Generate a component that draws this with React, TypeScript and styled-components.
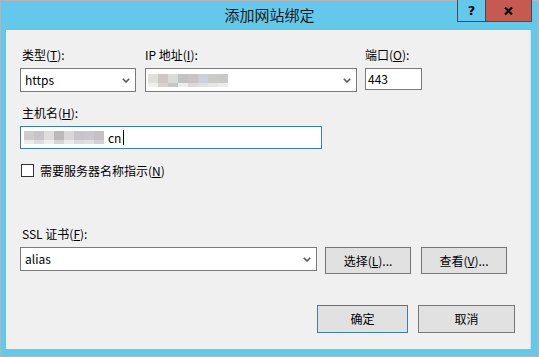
import React from "react";
import styled, { createGlobalStyle } from "styled-components";

const Global = createGlobalStyle`
  html, body { margin: 0; padding: 0; background: #ffffff; }
  * { box-sizing: border-box; }
`;

const FONT = `"Noto Sans CJK SC", "Noto Sans", sans-serif`;

const Win = styled.div`
  width: 539px;
  height: 357px;
  border: 1px solid #b5b5b5;
  background: #64c8ea;
  display: flex;
  flex-direction: column;
  font-family: ${FONT};
  font-size: 12px;
  color: #000;
`;

const TitleBar = styled.div`
  height: 29px;
  display: grid;
  grid-template-columns: 1fr auto 1fr;
  align-items: start;
`;

const Title = styled.div`
  grid-column: 2;
  align-self: center;
  font-size: 15px;
  line-height: 20px;
  color: #1a1a1a;
  margin-top: -1px;
`;

const Controls = styled.div`
  grid-column: 3;
  justify-self: end;
  display: flex;
  margin-top: -1px;
  margin-right: 6px;
  border: 1px solid #4a4a4a;
  border-top: none;
`;

const CtlButton = styled.div<{ $close?: boolean }>`
  width: ${(p) => (p.$close ? "46px" : "27px")};
  height: 21px;
  background: ${(p) => (p.$close ? "#c75a50" : "#64c8ea")};
  border-left: ${(p) => (p.$close ? "1px solid #4a4a4a" : "none")};
  display: flex;
  align-items: center;
  justify-content: center;
  font-family: "DejaVu Sans", sans-serif;
  font-weight: bold;
  font-size: 13px;
  color: #000;
`;

const Content = styled.div`
  flex: 1;
  margin: 0 7px 7px 5px;
  background: #f0f0f0;
  border-right: 1px solid #dcdcdc;
  padding: 17px 15px 0 14px;
  display: flex;
  flex-direction: column;
`;

const Row = styled.div<{ $mt?: number; $gap?: number; $justify?: string }>`
  display: flex;
  align-items: flex-start;
  margin-top: ${(p) => p.$mt ?? 0}px;
  gap: ${(p) => p.$gap ?? 0}px;
  justify-content: ${(p) => p.$justify ?? "flex-start"};
`;

const Column = styled.div<{ $w: number; $mr?: number }>`
  width: ${(p) => p.$w}px;
  margin-right: ${(p) => p.$mr ?? 0}px;
  display: flex;
  flex-direction: column;
`;

const Label = styled.div<{ $mt?: number; $pl?: number }>`
  height: 16px;
  line-height: 16px;
  margin-top: ${(p) => p.$mt ?? 0}px;
  margin-bottom: 5px;
  padding-left: ${(p) => p.$pl ?? 0}px;
  white-space: nowrap;
`;

const SelectBox = styled.div<{ $w?: number }>`
  width: ${(p) => (p.$w ? `${p.$w}px` : "100%")};
  height: 24px;
  border: 1px solid #7a7a7a;
  background: #fff;
  display: flex;
  align-items: center;
  justify-content: space-between;
  padding: 0 5px 0 4px;
`;

const TextBox = styled.div<{ $w?: number; $h?: number; $focus?: boolean }>`
  width: ${(p) => (p.$w ? `${p.$w}px` : "100%")};
  height: ${(p) => p.$h ?? 22}px;
  border: 1px solid ${(p) => (p.$focus ? "#3c7cb0" : "#7a7a7a")};
  background: #fff;
  display: flex;
  align-items: center;
  padding: 0 2px;
`;

const Value = styled.span`
  line-height: 16px;
`;

const Caret = styled.span`
  width: 1px;
  height: 15px;
  background: #000;
  margin-left: 2px;
`;

const Pixels = styled.div<{ $ml?: number }>`
  display: flex;
  flex-direction: column;
  margin-left: ${(p) => p.$ml ?? 0}px;
`;

const PixRow = styled.div`
  display: flex;
`;

const Pix = styled.span<{ $c: string; $h: number }>`
  width: 10px;
  height: ${(p) => p.$h}px;
  background: ${(p) => p.$c};
`;

const CheckRow = styled.div`
  display: flex;
  align-items: center;
  height: 16px;
  margin-top: 13px;
  padding-left: 1px;
  gap: 6px;
`;

const CheckBox = styled.span`
  width: 13px;
  height: 13px;
  border: 1px solid #333;
  background: #fff;
`;

const Button = styled.div<{ $w: number; $h: number; $default?: boolean }>`
  width: ${(p) => p.$w}px;
  height: ${(p) => p.$h}px;
  background: #e1e1e1;
  border: 1px solid ${(p) => (p.$default ? "#3c7cb0" : "#777")};
  display: flex;
  align-items: center;
  justify-content: center;
  line-height: 16px;
`;

const Chevron = () => (
  <svg width="8" height="5" viewBox="0 0 8 5">
    <polyline points="0.8,0.8 4,4 7.2,0.8" fill="none" stroke="#5a5a5a" strokeWidth="1.6" />
  </svg>
);

const CloseGlyph = () => (
  <svg width="9" height="8" viewBox="0 0 9 8">
    <line x1="1" y1="0.5" x2="8" y2="7.5" stroke="#000" strokeWidth="2.2" />
    <line x1="8" y1="0.5" x2="1" y2="7.5" stroke="#000" strokeWidth="2.2" />
  </svg>
);

const ipTop = ["#dfdfdb", "#cdc8c5", "#dadada", "#c2c2c2", "#c9c3c1", "#cdd1d7", "#cacac8", "#c9c9c7"];
const ipBottom = ["#f0f0ee", "#d5d1cf", "#c6c6c6", "#ececec", "#dcdad9", "#e0e0e0", "#e6e6e4", "#ebebf0"];
const hostTop = ["#d0cccc", "#c7c5c9", "#dedcdc", "#bcb9bb", "#d8d6d6", "#c7c5c9", "#c9c7c9", "#c4c0c4"];
const hostBottom = ["#ecebeb", "#dddcde", "#eeeeee", "#d6d5d6", "#ebebeb", "#dcdbdd", "#e1e0e1", "#d2d0d2"];

const Blur = ({ top, bottom, ml }: { top: string[]; bottom: string[]; ml?: number }) => (
  <Pixels $ml={ml}>
    <PixRow>
      {top.map((c, i) => (
        <Pix key={i} $c={c} $h={9} />
      ))}
    </PixRow>
    <PixRow>
      {bottom.map((c, i) => (
        <Pix key={i} $c={c} $h={4} />
      ))}
    </PixRow>
  </Pixels>
);

export default function App() {
  return (
    <>
      <Global />
      <Win>
        <TitleBar>
          <Title>添加网站绑定</Title>
          <Controls>
            <CtlButton>?</CtlButton>
            <CtlButton $close>
              <CloseGlyph />
            </CtlButton>
          </Controls>
        </TitleBar>
        <Content>
          <Row>
            <Column $w={116} $mr={9}>
              <Label $pl={2}>
                类型(<u>T</u>):
              </Label>
              <SelectBox>
                <Value>https</Value>
                <Chevron />
              </SelectBox>
            </Column>
            <Column $w={212} $mr={8}>
              <Label $pl={0}>
                IP 地址(<u>I</u>):
              </Label>
              <SelectBox>
                <Blur top={ipTop} bottom={ipBottom} ml={-2} />
                <Chevron />
              </SelectBox>
            </Column>
            <Column $w={57}>
              <Label>
                端口(<u>O</u>):
              </Label>
              <TextBox>
                <Value>443</Value>
              </TextBox>
            </Column>
          </Row>

          <Label $mt={13} $pl={2}>
            主机名(<u>H</u>):
          </Label>
          <TextBox $w={302} $h={23} $focus>
            <Blur top={hostTop} bottom={hostBottom} ml={1} />
            <Value style={{ marginLeft: 4 }}>cn</Value>
            <Caret />
          </TextBox>

          <CheckRow>
            <CheckBox />
            <span>
              需要服务器名称指示(<u>N</u>)
            </span>
          </CheckRow>

          <Label $mt={48} $pl={2}>
            SSL 证书(<u>F</u>):
          </Label>
          <Row $gap={8}>
            <SelectBox $w={297}>
              <Value>alias</Value>
              <Chevron />
            </SelectBox>
            <Row $gap={10}>
              <Button $w={86} $h={27}>
                选择(<u>L</u>)...
              </Button>
              <Button $w={86} $h={27}>
                查看(<u>V</u>)...
              </Button>
            </Row>
          </Row>

          <Row $mt={31} $gap={10} $justify="flex-end">
            <Button $w={91} $h={28} $default>
              确定
            </Button>
            <Button $w={97} $h={28}>
              取消
            </Button>
          </Row>
        </Content>
      </Win>
    </>
  );
}
